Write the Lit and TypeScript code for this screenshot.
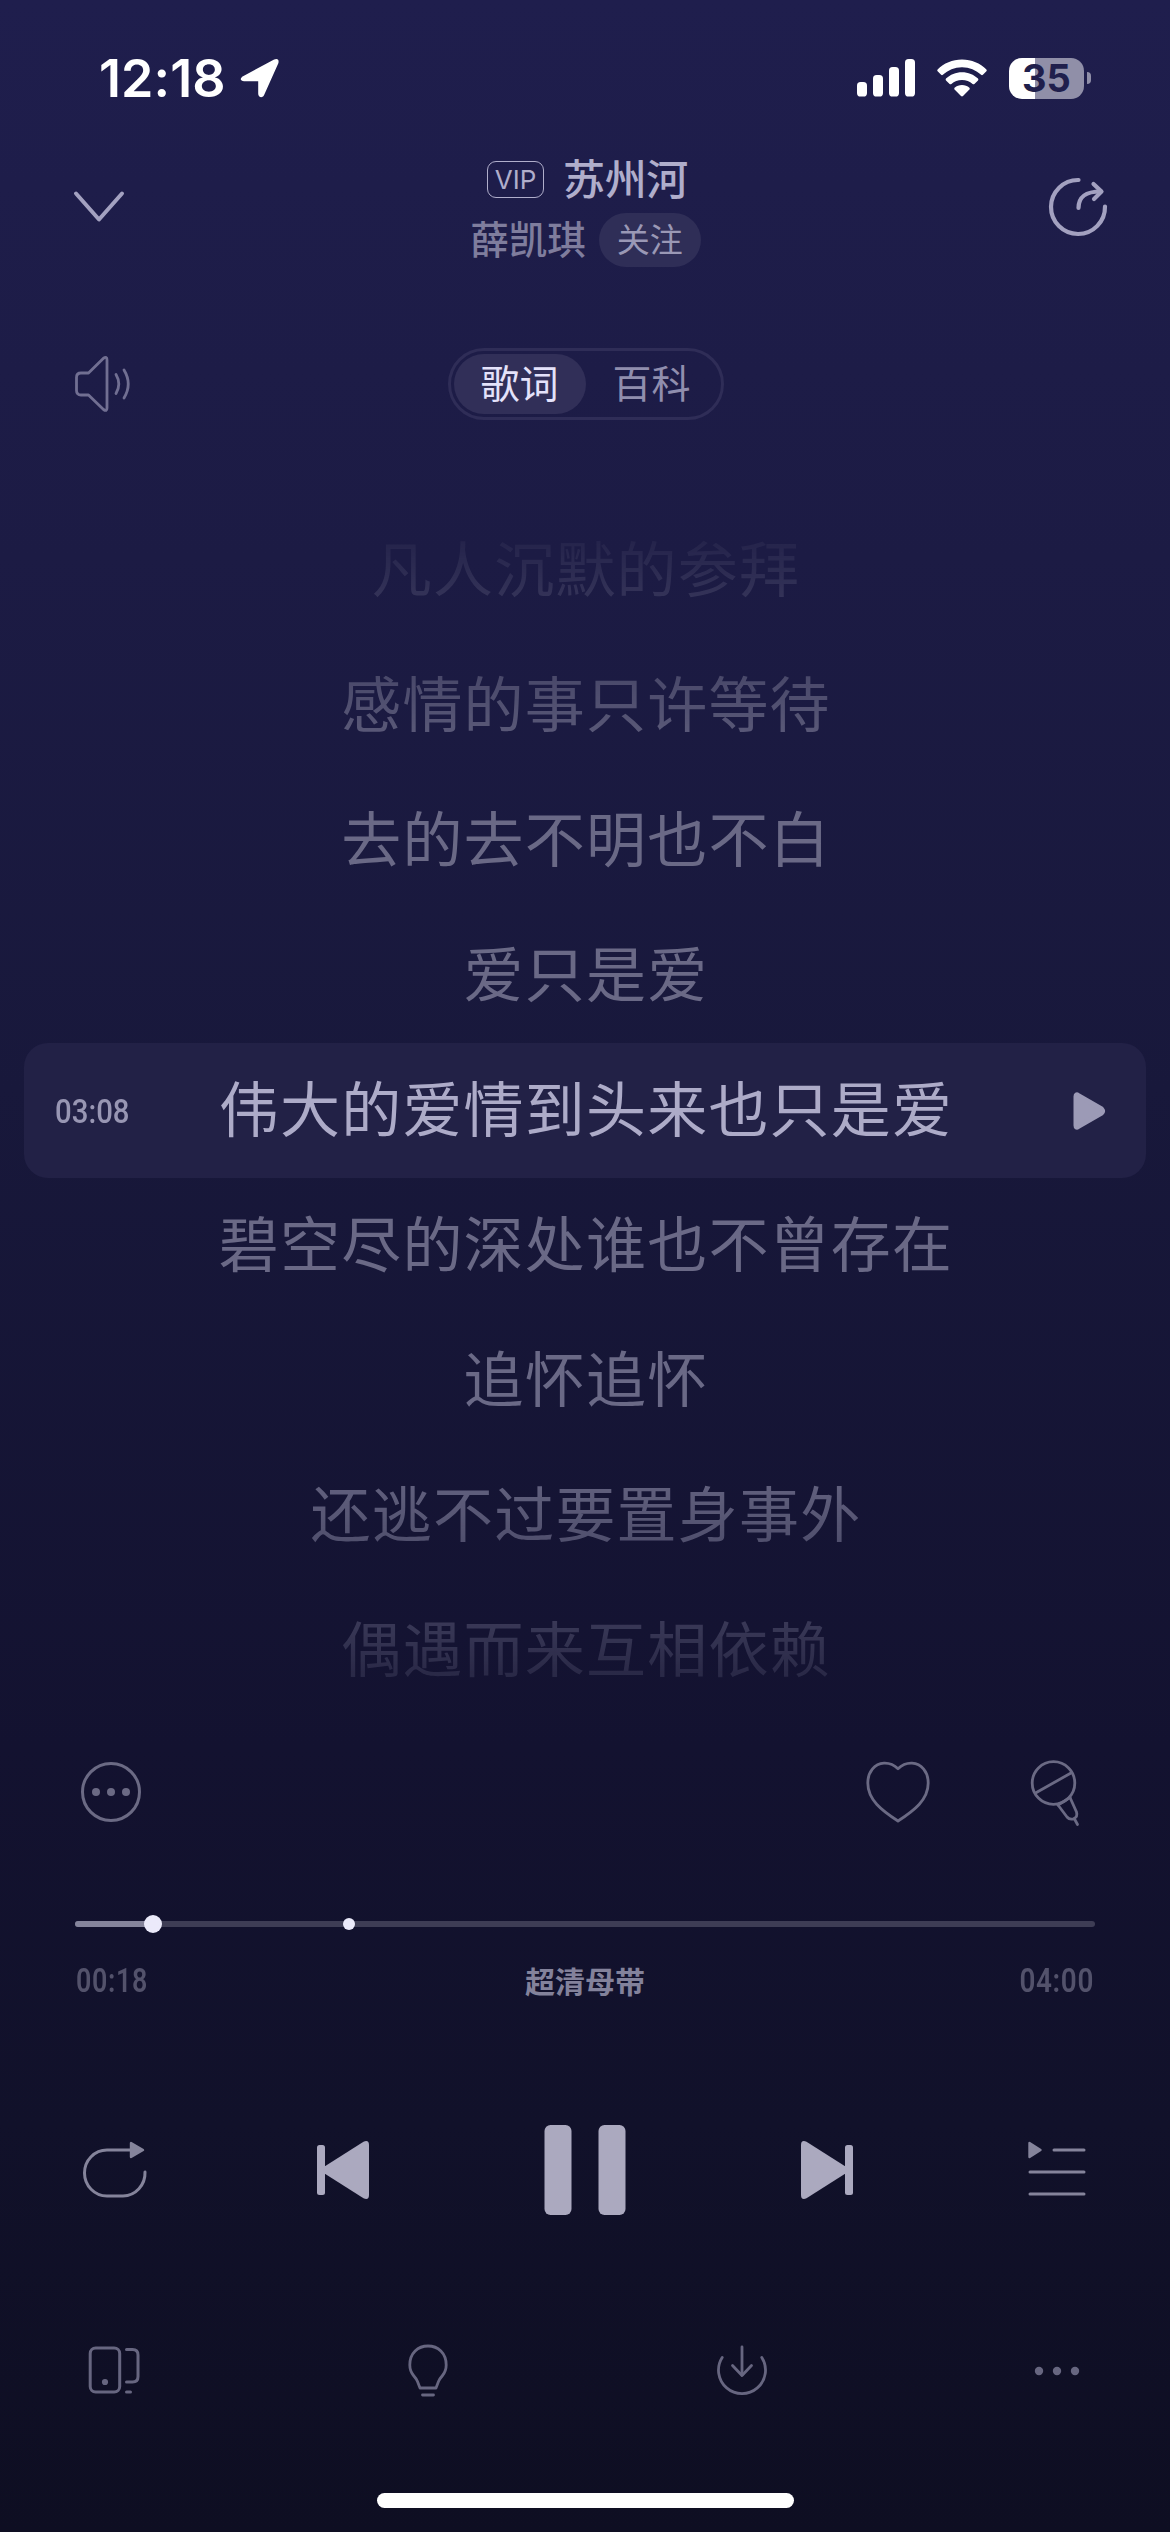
import { LitElement, html, css, svg } from "lit";
import { customElement } from "lit/decorators.js";
import { classMap } from "lit/directives/class-map.js";

const LYRICS = [
  "凡人沉默的参拜",
  "感情的事只许等待",
  "去的去不明也不白",
  "爱只是爱",
  "伟大的爱情到头来也只是爱",
  "碧空尽的深处谁也不曾存在",
  "追怀追怀",
  "还逃不过要置身事外",
  "偶遇而来互相依赖",
];
const CURRENT = 4;

const icon = (w: number, h: number, body: unknown) => html`
  <svg width=${w} height=${h} viewBox="0 0 ${w} ${h}" fill="none" stroke-linecap="round" stroke-linejoin="round">${body}</svg>
`;

const ICONS = {
  location: icon(42, 42, svg`<path d="M3.5 20.5 L35.5 3.2 Q39.6 1.6 38.6 6 L24.5 37.5 Q22.8 40.6 20.6 38.6 Q20 37.8 20 36.5 V23.4 H5 Q1 23 3.5 20.5 Z" fill="#fff" stroke="#fff" stroke-width="1.6"/>`),
  signal: icon(58, 38, svg`
    <g fill="#fff">
      <rect x="0" y="23" width="10" height="14.5" rx="3.6"/>
      <rect x="16" y="16" width="10" height="21.5" rx="3.6"/>
      <rect x="32" y="8" width="10" height="29.5" rx="3.6"/>
      <rect x="48" y="0" width="10" height="37.5" rx="3.6"/>
    </g>`),
  wifi: icon(50, 38, svg`
    <g fill="#fff">
      <path d="M25 0.5 C34.6 0.5 43.2 4.3 49.4 10.4 Q50.2 11.3 49.4 12.2 L45.9 15.8 Q45 16.6 44.1 15.8 C39.1 11.1 32.4 8.2 25 8.2 C17.6 8.2 10.9 11.1 5.9 15.8 Q5 16.6 4.1 15.8 L0.6 12.2 Q-0.2 11.3 0.6 10.4 C6.8 4.3 15.4 0.5 25 0.5 Z"/>
      <path d="M25 13.3 C31.2 13.3 36.8 15.7 41 19.6 Q41.8 20.5 41 21.4 L37.4 24.9 Q36.5 25.8 35.6 24.9 C32.8 22.4 29.1 20.9 25 20.9 C20.9 20.9 17.2 22.4 14.4 24.9 Q13.5 25.8 12.6 24.9 L9 21.4 Q8.2 20.5 9 19.6 C13.2 15.7 18.8 13.3 25 13.3 Z"/>
      <path d="M25 26 C27.8 26 30.4 27 32.4 28.7 Q33.2 29.6 32.4 30.5 L26 37 Q25 37.9 24 37 L17.6 30.5 Q16.8 29.6 17.6 28.7 C19.6 27 22.2 26 25 26 Z"/>
    </g>`),
  down: icon(52, 32, svg`<path d="M3 2.5 L26 28.5 L49 2.5" stroke="currentColor" stroke-width="4"/>`),
  share: icon(60, 60, svg`
    <g stroke="currentColor" stroke-width="4.2">
      <path d="M30.5 3 A27 27 0 1 0 57 29.5"/>
      <path d="M30.5 31 C30.5 19 38 14.5 53 14.5"/>
      <path d="M45.5 7 L53.5 14.5 L46 22"/>
    </g>`),
  speaker: icon(58, 58, svg`
    <g stroke="currentColor" stroke-width="2.8">
      <path d="M7 18 H14.5 L29.5 3.2 Q33 1 33 5 V53 Q33 57 29.5 54.5 L14.5 40 H7 Q2.5 40 2.5 35.5 V22.5 Q2.5 18 7 18 Z"/>
      <path d="M42 19.5 Q47.6 29 42 38.5"/>
      <path d="M50 15 Q58.5 29 50 43"/>
    </g>`),
  play: icon(34, 40, svg`<path d="M4 5.5 V34.5 Q4 37 6 35.7 L29.5 22 Q31.5 20 29.5 18 L6 4.3 Q4 3 4 5.5 Z" fill="currentColor" stroke="currentColor" stroke-width="5"/>`),
  comment: icon(62, 62, svg`
    <circle cx="31" cy="31" r="28.5" stroke="currentColor" stroke-width="3"/>
    <g fill="currentColor"><circle cx="16" cy="31" r="4"/><circle cx="31" cy="31" r="4"/><circle cx="46" cy="31" r="4"/></g>`),
  heart: icon(66, 64, svg`<path d="M33 8.8 C28.5 4.3 23.5 3 19 3.2 C9.5 3.8 2.8 12 2.8 23 C2.8 40 17 50.5 33 61 C49 50.5 63.2 40 63.2 23 C63.2 12 56.5 3.8 47 3.2 C42.5 3 37.5 4.3 33 8.8 Z" stroke="currentColor" stroke-width="2.8"/>`),
  mic: icon(50, 68, svg`
    <g stroke="currentColor" stroke-width="2.8">
      <circle cx="23.5" cy="25" r="21.3"/>
      <path d="M5.5 35 L41 15"/>
      <path d="M28 47 L37 59 Q39.5 62 43.5 60.8 Q48 59 46.5 54 L40 39.5"/>
      <path d="M28 47 L40 39.5"/>
      <path d="M44.5 61 L47.5 66.5"/>
    </g>`),
  loop: icon(66, 60, svg`
    <path d="M50 10 H25 A22.5 23 0 0 0 25 56 H41 A22.5 23 0 0 0 63 32" stroke="currentColor" stroke-width="3"/>
    <path d="M49 3 V17 L61 10 Z" fill="currentColor" stroke="currentColor" stroke-width="2.4"/>`),
  prev: icon(52, 58, svg`
    <g fill="currentColor"><rect x="0" y="4" width="8" height="50" rx="2.5"/>
    <path d="M6 29 L7.5 25.5 L46.5 0.7 Q52 -1.5 52 4 V54 Q52 59.5 46.5 57.3 L7.5 32.5 Z"/></g>`),
  pause: icon(82, 90, svg`<g fill="currentColor"><rect x="0.5" width="27" height="90" rx="6"/><rect x="54.5" width="27" height="90" rx="6"/></g>`),
  next: icon(52, 58, svg`
    <g fill="currentColor"><rect x="44" y="4" width="8" height="50" rx="2.5"/>
    <path d="M46 29 L44.5 25.5 L5.5 0.7 Q0 -1.5 0 4 V54 Q0 59.5 5.5 57.3 L44.5 32.5 Z"/></g>`),
  queue: icon(58, 60, svg`
    <path d="M1.5 3 V17 L12.5 10 Z" fill="currentColor" stroke="currentColor" stroke-width="2.4"/>
    <path d="M26 10 H56 M2 32 H56 M2 54 H56" stroke="currentColor" stroke-width="3"/>`),
  devices: icon(54, 52, svg`
    <g stroke="currentColor" stroke-width="3">
      <rect x="2.2" y="3" width="29.5" height="44" rx="5.5"/>
      <path d="M38.5 4.5 H44.5 Q50 4.5 50 10 V31.5 Q50 37 44.5 37 H38.5"/>
      <path d="M38.5 47 H42.5"/>
    </g>
    <circle cx="17" cy="37" r="3.1" fill="currentColor"/>`),
  bulb: icon(42, 56, svg`
    <g stroke="currentColor" stroke-width="2.8">
      <path d="M13 45 L10.5 38.5 Q9.5 36 6.5 32.5 Q2.8 28 2.8 22 C2.8 10 11 3 21 3 S39.2 10 39.2 22 Q39.2 28 35.5 32.5 Q32.5 36 31.5 38.5 L29 45 Z"/>
      <path d="M15.5 52 H26.5"/>
    </g>`),
  download: icon(54, 54, svg`
    <g stroke="currentColor" stroke-width="2.8">
      <path d="M7.2 13.5 A23.5 23.5 0 1 0 46.8 13.5"/>
      <path d="M27 3 V31"/><path d="M17.5 21.5 L27 31.5 L36.5 21.5"/>
    </g>`),
  more: icon(46, 12, svg`<g fill="currentColor"><circle cx="5" cy="6" r="4.2"/><circle cx="23" cy="6" r="4.2"/><circle cx="41" cy="6" r="4.2"/></g>`),
};

@customElement("app-root")
export class AppRoot extends LitElement {
  static styles = css`
    :host {
      display: flex;
      flex-direction: column;
      box-sizing: border-box;
      width: 1170px;
      height: 2532px;
      overflow: hidden;
      background: linear-gradient(#1f1e4d 0%, #1c1b44 22%, #18183b 43%, #131230 69%, #11112a 84%, #0e0e22 100%);
      color: #b0aecb;
      font-family: Inter, "Noto Sans CJK SC", sans-serif;
    }
    svg { display: block; flex: none; overflow: visible; }
    .row { display: flex; align-items: center; box-sizing: border-box; flex: none; }
    .between { justify-content: space-between; }

    .status { height: 156px; padding: 0 79px 0 99px; color: #fff; }
    .clock { display: flex; align-items: center; gap: 13px; font-size: 52px; font-weight: 600; letter-spacing: 0.1px; }
    .indicators { display: flex; align-items: center; gap: 22px; }
    .battery { display: flex; align-items: center; gap: 3px; }
    .cell {
      width: 75px; height: 41px; border-radius: 13px; display: grid; place-items: center;
      background: linear-gradient(90deg, #fff 35%, #908fa8 35%);
      color: #201f4c; font-size: 38px; font-weight: 700; line-height: 41px;
    }
    .nub { width: 4px; height: 12px; border-radius: 0 6px 6px 0; background: #908fa8; }

    .header { height: 110px; padding: 0 62px 0 73px; color: #a3a1c0; }
    .header svg { margin-bottom: 8px; }
    .song { display: flex; flex-direction: column; align-items: center; margin-left: 2px; }
    .line { display: flex; align-items: center; }
    .title-line { height: 48px; gap: 19px; color: #b0aecb; }
    .title { font-size: 42px; font-weight: 500; line-height: 48px; letter-spacing: -0.4px; }
    .vip { box-sizing: border-box; width: 57px; height: 37px; border: 1.6px solid #b0aecb; border-radius: 9px; display: grid; place-items: center; font-size: 26px; line-height: 34px; }
    .artist-line { height: 54px; margin-top: 9px; margin-right: 4px; gap: 13px; color: #7f7d9d; }
    .artist { font-size: 38.5px; font-weight: 500; line-height: 54px; }
    .follow { width: 102px; height: 54px; border-radius: 27px; background: #2f2e57; color: #9a98b5; font-size: 33px; line-height: 54px; text-align: center; }

    .tabs-row { height: 114px; margin-top: 61px; padding-left: 74px; color: #716f92; display: grid; grid-template-columns: 1fr auto 1fr; padding-right: 73px; }
    .tabs { display: flex; box-sizing: border-box; padding: 3px; border: 3px solid #2f2d57; border-radius: 36px; }
    .tab { width: 132px; height: 60px; border-radius: 30px; font-size: 39px; line-height: 60px; text-align: center; color: #908eae; }
    .tab.on { background: #312f58; color: #e4e2fa; }

    .lyrics {
      display: flex; flex-direction: column; flex: none; margin: 62px 24px 0;
      -webkit-mask-image: linear-gradient(transparent 5px, #000 290px, #000 950px, transparent 1250px);
      mask-image: linear-gradient(transparent 5px, #000 290px, #000 950px, transparent 1250px);
    }
    .lyric { display: grid; grid-template-columns: 150px 1fr 150px; align-items: center; height: 135px; box-sizing: border-box; border-radius: 24px; color: #6a6986; }
    .text { grid-column: 2; text-align: center; white-space: nowrap; font-size: 60px; line-height: 135px; letter-spacing: 1.2px; justify-self: center; padding-left: 2px; }
    .lyric.on { background: #222146; color: #adabc8; }
    .time { font-family: Roboto, sans-serif; font-size: 33px; font-weight: 500; white-space: nowrap; }
    .lyric .time { padding: 2px 0 0 31px; transform: scaleX(0.89); transform-origin: 31px 50%; color: #9896b3; }
    .go { justify-self: end; margin-right: 40px; color: #9c9ab6; }

    .actions { height: 66px; margin-top: 41px; padding: 0 90px 0 80px; color: #6b6a84; }
    .pair { display: flex; align-items: center; gap: 99px; }

    .progress { position: relative; flex: none; height: 6px; margin: 96px 75px 0; border-radius: 3px; background: #3e3d55; }
    .played { height: 6px; border-radius: 3px; background: #85849b; }
    .knob { position: absolute; top: 50%; border-radius: 50%; background: #ebeafa; transform: translate(-50%, -50%); }
    .knob.big { width: 18px; height: 18px; }
    .knob.small { width: 12px; height: 12px; }

    .times { height: 60px; margin-top: 23px; padding: 0 76px; color: #53526b; }
    .times .time { font-size: 34px; font-weight: 600; letter-spacing: 0.8px; width: 90px; }
    .times .start { transform: scaleX(0.79); transform-origin: 0 50%; }
    .times .end { display: flex; justify-content: flex-end; transform: scaleX(0.82); transform-origin: 100% 50%; }
    .quality { font-size: 30px; font-weight: 700; color: #83829b; }

    .transport { height: 110px; margin-top: 105px; padding: 0 84px 0 82px; color: #aba9bf; }
    .dim { color: #85849b; }
    .dim.mode { width: 60px; }
    .tools { height: 60px; margin-top: 116px; padding: 0 90px 0 88px; color: #676680; }
    .home { flex: none; width: 417px; height: 15px; margin: 92px auto 0; border-radius: 8px; background: #fff; }
  `;

  render() {
    return html`
      <div class="row between status">
        <div class="clock"><span>12:18</span>${ICONS.location}</div>
        <div class="indicators">
          ${ICONS.signal}${ICONS.wifi}
          <div class="battery"><div class="cell">35</div><div class="nub"></div></div>
        </div>
      </div>

      <div class="row between header">
        ${ICONS.down}
        <div class="song">
          <div class="line title-line"><span class="vip">VIP</span><span class="title">苏州河</span></div>
          <div class="line artist-line"><span class="artist">薛凯琪</span><span class="follow">关注</span></div>
        </div>
        ${ICONS.share}
      </div>

      <div class="row tabs-row">
        ${ICONS.speaker}
        <div class="tabs"><div class="tab on">歌词</div><div class="tab">百科</div></div>
      </div>

      <div class="lyrics">
        ${LYRICS.map((text, i) => {
          const on = i === CURRENT;
          return html`<div class=${classMap({ lyric: true, on })}>
            ${on ? html`<span class="time">03:08</span>` : null}
            <span class="text">${text}</span>
            ${on ? html`<span class="go">${ICONS.play}</span>` : null}
          </div>`;
        })}
      </div>

      <div class="row between actions">
        ${ICONS.comment}
        <div class="pair">${ICONS.heart}${ICONS.mic}</div>
      </div>

      <div class="progress">
        <div class="played" style="width:7.6%"></div>
        <div class="knob big" style="left:7.6%"></div>
        <div class="knob small" style="left:26.85%"></div>
      </div>
      <div class="row between times">
        <span class="time start">00:18</span><span class="quality">超清母带</span><span class="time end">04:00</span>
      </div>

      <div class="row between transport">
        <span class="dim mode">${ICONS.loop}</span>
        ${ICONS.prev}${ICONS.pause}${ICONS.next}
        <span class="dim">${ICONS.queue}</span>
      </div>

      <div class="row between tools">${ICONS.devices}${ICONS.bulb}${ICONS.download}${ICONS.more}</div>
      <div class="home"></div>
    `;
  }
}
